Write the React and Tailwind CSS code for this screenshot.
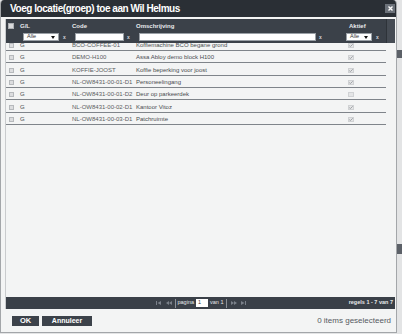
import React from "react";

const rows = [
  { code: "BCO-COFFEE-01", desc: "Koffiemachine BCO begane grond", active: true, h: "h-[8px]" },
  { code: "DEMO-H100", desc: "Assa Abloy demo block H100", active: true, h: "h-[12px]" },
  { code: "KOFFIE-JOOST", desc: "Koffie beperking voor joost", active: true, h: "h-[13px]" },
  { code: "NL-OW8431-00-01-D1", desc: "Personeelingang", active: true, h: "h-[12px]" },
  { code: "NL-OW8431-00-01-D2", desc: "Deur op parkeerdek", active: false, h: "h-[12px]" },
  { code: "NL-OW8431-00-02-D1", desc: "Kantoor Vitoz", active: true, h: "h-[13px]" },
  { code: "NL-OW8431-00-03-D1", desc: "Patchruimte", active: true, h: "h-[12px]" },
];

function SmallX() {
  return <span className="text-[5px] font-bold leading-none text-[#d4d7da]">x</span>;
}

function Select({ w }) {
  return (
    <div className={`${w} h-[8px] bg-white border border-[#9aa0a6] flex items-center justify-between px-[3px]`}>
      <span className="text-[5.5px] leading-none text-[#333]">Alle</span>
      <svg width="4" height="3" viewBox="0 0 4 3"><path d="M0 0H4L2 3Z" fill="#111" /></svg>
    </div>
  );
}

function PagerIcon({ kind }) {
  const c = "#7b818a";
  if (kind === "first")
    return (
      <svg width="5" height="4" viewBox="0 0 5 4"><rect x="0" y="0" width="1" height="4" fill={c} /><path d="M5 0V4L1.5 2Z" fill={c} /></svg>
    );
  if (kind === "prev")
    return (
      <svg width="6" height="4" viewBox="0 0 6 4"><path d="M3 0V4L0 2Z" fill={c} /><path d="M6 0V4L3 2Z" fill={c} /></svg>
    );
  if (kind === "next")
    return (
      <svg width="6" height="4" viewBox="0 0 6 4"><path d="M0 0V4L3 2Z" fill={c} /><path d="M3 0V4L6 2Z" fill={c} /></svg>
    );
  return (
    <svg width="5" height="4" viewBox="0 0 5 4"><path d="M0 0V4L3.5 2Z" fill={c} /><rect x="4" y="0" width="1" height="4" fill={c} /></svg>
  );
}

export default function App() {
  return (
    <div className="w-[402px] h-[334px] flex bg-[#e3e4e5] overflow-hidden font-['Liberation_Sans',Arial,sans-serif]">
      <div className="w-[397px] h-[333px] flex flex-col bg-[#f3f4f4] border-x border-b border-[#a3a6a9] rounded-t-[4px] overflow-hidden">
        {/* Title bar */}
        <div className="h-[17px] shrink-0 bg-[#2a2f35] flex items-center justify-between pl-[9px] pr-[1px]">
          <span className="text-[10px] font-bold text-white tracking-[-0.45px] leading-none">
            Voeg locatie(groep) toe aan Wil Helmus
          </span>
          <div className="w-[10px] h-[9px] bg-[#6b7179] flex items-center justify-center">
            <svg width="5" height="5" viewBox="0 0 5 5">
              <path d="M0.5 0.5L4.5 4.5M4.5 0.5L0.5 4.5" stroke="#fff" strokeWidth="1.4" />
            </svg>
          </div>
        </div>

        {/* Body */}
        <div className="flex-1 flex flex-col pt-[2px] pl-[4px] pr-[1px]">
          <div className="flex-1 flex flex-col border-l border-[#c9cbcd]">
            {/* Grid header */}
            <div className="h-[24px] shrink-0 flex bg-[#3b4149]">
              <div className="w-[380px] flex flex-col">
                <div className="h-[12px] flex items-center pt-[1px]">
                  <div className="w-[14px] pl-[2px] flex items-center">
                    <div className="w-[6px] h-[6px] bg-[#d9dadc] border border-[#aeb1b5]" />
                  </div>
                  <div className="w-[52px] text-[6px] font-bold text-[#e8eaec] leading-none">G/L</div>
                  <div className="w-[64px] text-[6px] font-bold text-[#e8eaec] leading-none">Code</div>
                  <div className="w-[208px] text-[6px] font-bold text-[#e8eaec] leading-none">Omschrijving</div>
                  <div className="w-[42px] pl-[5px] text-[6px] font-bold text-[#e8eaec] leading-none">Aktief</div>
                </div>
                <div className="h-[12px] flex items-center">
                  <div className="w-[14px]" />
                  <div className="w-[52px] flex items-center pl-[3px] gap-[4px]">
                    <Select w="w-[36px]" />
                    <SmallX />
                  </div>
                  <div className="w-[64px] flex items-center pl-[3px] gap-[3px]">
                    <div className="w-[49px] h-[8px] bg-white border border-[#9aa0a6]" />
                    <SmallX />
                  </div>
                  <div className="w-[208px] flex items-center pl-[3px] gap-[3px]">
                    <div className="w-[177px] h-[8px] bg-white border border-[#9aa0a6]" />
                    <SmallX />
                  </div>
                  <div className="w-[42px] flex items-center pl-[2px] gap-[4px]">
                    <Select w="w-[26px]" />
                    <SmallX />
                  </div>
                </div>
              </div>
              <div className="w-[11px] bg-[#464c54] border-l border-[#2e3339]" />
            </div>

            {/* Rows */}
            {rows.map((r) => (
              <div
                key={r.code}
                className={`${r.h} w-[380px] flex items-end pb-[2px] border-b border-[#7f848a] text-[6px] leading-none text-[#4a4d51]`}
              >
                <div className="w-[14px] pl-[3px]">
                  <div className="w-[5px] h-[5px] bg-[#dcdddf] border border-[#b6b9bc]" />
                </div>
                <div className="w-[52px]">G</div>
                <div className="w-[64px] text-[#5a5d61]">{r.code}</div>
                <div className="w-[208px]">{r.desc}</div>
                <div className="w-[42px] pl-[4px]">
                  <div className="w-[6px] h-[5px] bg-[#e4e5e6] border border-[#d0d2d4] flex items-center justify-center">
                    {r.active && (
                      <svg width="4" height="3" viewBox="0 0 4 3">
                        <path d="M0.3 1.6L1.4 2.6L3.7 0.3" stroke="#8d9094" strokeWidth="0.8" fill="none" />
                      </svg>
                    )}
                  </div>
                </div>
              </div>
            ))}

            <div className="flex-1" />

            {/* Pager */}
            <div className="h-[12px] shrink-0 w-[389px] bg-[#3a4048] grid grid-cols-[1fr_auto_1fr] items-center text-[5.5px] leading-none text-[#e6e8ea]">
              <div />
              <div className="flex items-center">
                <PagerIcon kind="first" />
                <div className="w-[5px]" />
                <PagerIcon kind="prev" />
                <div className="w-[1px] h-[9px] bg-[#8b9097] ml-[3px] mr-[2px]" />
                <span>pagina</span>
                <div className="w-[12px] h-[8px] bg-white ml-[2px] mr-[2px] flex items-center pl-[2px] text-[#333]">1</div>
                <span>van 1</span>
                <div className="w-[1px] h-[9px] bg-[#8b9097] ml-[2px] mr-[4px]" />
                <PagerIcon kind="next" />
                <div className="w-[4px]" />
                <PagerIcon kind="last" />
              </div>
              <div className="text-right pr-[2px] font-bold">regels 1 - 7 van 7</div>
            </div>
          </div>
        </div>

        {/* Footer */}
        <div className="h-[23px] shrink-0 flex items-center justify-between pl-[11px] pr-[5px]">
          <div className="flex gap-[3px]">
            <div className="w-[27px] h-[10px] bg-[#3c424a] flex items-center justify-center text-[7.5px] font-bold text-white leading-none">OK</div>
            <div className="w-[50px] h-[10px] bg-[#3c424a] flex items-center justify-center text-[7px] font-bold text-white leading-none">Annuleer</div>
          </div>
          <span className="text-[8px] text-[#555a5f] leading-none">0 items geselecteerd</span>
        </div>
      </div>

      {/* Background page edge */}
      <div className="flex-1 flex flex-col">
        <div className="h-[50px]" />
        <div className="h-[8px] bg-[#5c6168]" />
        <div className="h-[186px]" />
        <div className="h-[10px] bg-[#5c6168]" />
      </div>
    </div>
  );
}
